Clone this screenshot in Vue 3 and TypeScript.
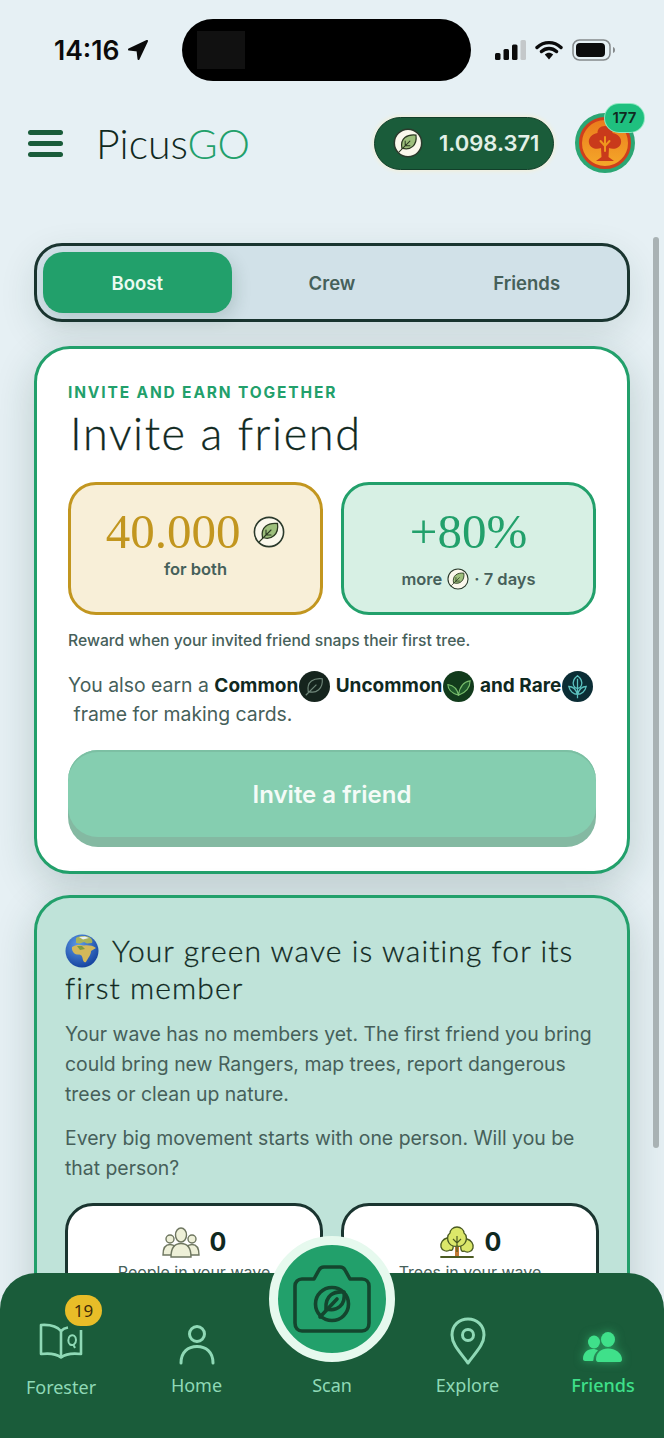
<script setup lang="ts">
interface NavItem {
  id: string;
  label: string;
}

const navItems: NavItem[] = [
  { id: 'forester', label: 'Forester' },
  { id: 'home', label: 'Home' },
  { id: 'scan', label: 'Scan' },
  { id: 'explore', label: 'Explore' },
  { id: 'friends', label: 'Friends' },
];

const tabs = ['Boost', 'Crew', 'Friends'];
</script>

<template>
  <div class="page">
    <svg class="defs" width="0" height="0">
      <symbol id="coin" viewBox="0 0 32 32">
        <circle cx="16" cy="16" r="14.6" fill="#fbf8ec" stroke="#2b3a2c" stroke-width="1.6" />
        <path d="M24.5 7.5C15 6.5 7.5 11 9.5 21.5C19 24.5 26 18 24.5 7.5Z" fill="#9dbf7c" stroke="#2c3a22" stroke-width="1.3" />
        <path d="M6.5 25.5L18 14M13 19V14M13 19H18" fill="none" stroke="#2c3a22" stroke-width="1.1" stroke-linecap="round" />
      </symbol>
    </svg>

    <div class="status">
      <div class="time">
        <span>14:16</span>
        <svg width="22" height="22" viewBox="0 0 22 22"><path d="M20 2L2 10.5L10.5 11.5L11.5 20Z" fill="#0b0b0b" stroke="#0b0b0b" stroke-width="2" stroke-linejoin="round" /></svg>
      </div>
      <div class="status-icons">
        <svg class="signal" width="32" height="20" viewBox="0 0 32 20">
          <rect x="0" y="13" width="5.5" height="7" rx="1.5" fill="#0b0b0b" />
          <rect x="8.5" y="9" width="5.5" height="11" rx="1.5" fill="#0b0b0b" />
          <rect x="17" y="4.500" width="5.5" height="15.500" rx="1.5" fill="#0b0b0b" />
          <rect x="25.500" y="0" width="5.500" height="20" rx="1.500" fill="#c4c8ca" />
        </svg>
        <svg width="28" height="20" viewBox="0 0 28 20">
          <path d="M2 7.500C9 1 19 1 26 7.500M6.500 11.500C11 7.500 17 7.500 21.500 11.500" fill="none" stroke="#0b0b0b" stroke-width="3.400" stroke-linecap="round" />
          <path d="M9.800 14.500C12.500 12.300 15.500 12.300 18.200 14.500L14 19.500Z" fill="#0b0b0b" />
        </svg>
        <svg width="44" height="22" viewBox="0 0 44 22">
          <rect x="1" y="1" width="37" height="20" rx="6.500" fill="none" stroke="#85898b" stroke-width="1.500" />
          <rect x="4" y="4" width="29" height="14" rx="4" fill="#0b0b0b" />
          <path d="M41 8C42.500 8.500 43 9.500 43 11C43 12.500 42.500 13.500 41 14Z" fill="#85898b" />
        </svg>
      </div>
    </div>
    <div class="island"><div class="island-cam"></div></div>

    <header class="header">
      <div class="burger"><span></span><span></span><span></span></div>
      <div class="logo">Picus<span>GO</span></div>
      <div class="balance">
        <svg class="balance-coin" width="30" height="30"><use href="#coin" /></svg>
        <span>1.098.371</span>
      </div>
      <div class="avatar">
        <svg width="60" height="60" viewBox="0 0 60 60">
          <defs>
            <linearGradient id="medal" x1="0" y1="0" x2="0" y2="1">
              <stop offset="0" stop-color="#ea7a1c" />
              <stop offset="1" stop-color="#f5a92a" />
            </linearGradient>
          </defs>
          <circle cx="30" cy="30" r="30" fill="#2ba673" />
          <circle cx="30" cy="30" r="24.500" fill="url(#medal)" stroke="#cf3f1c" stroke-width="3" />
          <path d="M30 13C25 13 22.500 16 22.500 20C17 21 13 25 14 30C15 35 21 37 26 35L26.500 44L21 48H39L33.500 44L34 35C39 37 45 35 46 30C47 25 43 21 37.500 20C37.500 16 35 13 30 13Z" fill="#c93a1b" />
          <path d="M30 38V24M25.500 28L30 33L34.500 28" fill="none" stroke="#f0961e" stroke-width="2" stroke-linecap="round" />
        </svg>
        <div class="level">177</div>
      </div>
    </header>

    <main class="content">
      <div class="tabs">
        <div v-for="(tab, i) in tabs" :key="tab" class="tab" :class="{ active: i === 0 }">{{ tab }}</div>
      </div>

      <section class="card invite">
        <div class="eyebrow">INVITE AND EARN TOGETHER</div>
        <h1 class="title">Invite a friend</h1>

        <div class="rewards">
          <div class="reward gold">
            <div class="amount">
              40.000
              <svg width="32" height="32"><use href="#coin" /></svg>
            </div>
            <div class="reward-sub">for both</div>
          </div>
          <div class="reward mint">
            <div class="amount">+80%</div>
            <div class="reward-sub">
              more
              <svg width="22" height="22"><use href="#coin" /></svg>
              · 7 days
            </div>
          </div>
        </div>

        <p class="note">Reward when your invited friend snaps their first tree.</p>

        <p class="earn">
          You also earn a <b>Common</b><svg class="frame" width="31" height="31" viewBox="0 0 32 32">
            <circle cx="16" cy="16" r="16" fill="#15241d" />
            <path d="M24 8C15 7 8 11 9.500 21C18 24 25 18 24 8Z" fill="none" stroke="#6f8679" stroke-width="1.200" />
            <path d="M7 25L18 14" stroke="#6f8679" stroke-width="1.200" />
          </svg> <b>Uncommon</b><svg class="frame" width="31" height="31" viewBox="0 0 32 32">
            <circle cx="16" cy="16" r="16" fill="#123b1c" />
            <path d="M16 25C15 19 11 15 5 14C5 20 9 23 16 25ZM16 25C17 17 21 11 28 10C28 17 24 22 16 25Z" fill="#1f5a2b" stroke="#79bd6c" stroke-width="1.100" />
          </svg> <b>and Rare</b><svg class="frame" width="31" height="31" viewBox="0 0 32 32">
            <circle cx="16" cy="16" r="16" fill="#0b2d35" />
            <path d="M16 5C12 8 11 12 12 15C13 17 15 18 16 18C17 18 19 17 20 15C21 12 20 8 16 5ZM16 8V28M16 24C12 24 8 21 7 16C10 16 14 18 16 24ZM16 24C20 24 24 21 25 16C22 16 18 18 16 24Z" fill="none" stroke="#5cc2c0" stroke-width="1.300" />
          </svg><br />&nbsp;frame for making cards.
        </p>

        <button class="invite-btn">Invite a friend</button>
      </section>

      <section class="card wave">
        <h2 class="wave-title">
          <svg class="globe" width="34" height="34" viewBox="0 0 34 34">
            <defs>
              <radialGradient id="sea" cx="40%" cy="30%" r="75%">
                <stop offset="0" stop-color="#5d9be8" />
                <stop offset="1" stop-color="#123f9c" />
              </radialGradient>
            </defs>
            <circle cx="17" cy="17" r="16.500" fill="url(#sea)" />
            <path d="M11 4C15 1.500 21 1.500 25 3.500C27 5 28 7 27 9L22 9.500L19 8L15 9.500L11 9Z" fill="#a9b35a" />
            <path d="M7 13C10 10.500 15 10.500 19 11.500C23 11 28 11.500 31 14L26 17C26 21 23 24 21 28C19 29 18 27 17.500 24C17 21 15.500 20.500 12 20.500C9 20 6.500 17 7 13Z" fill="#d3b85a" />
            <path d="M12 12L17 12L20 15L15 16Z" fill="#7f9a3f" />
            <path d="M14 3L20 2.500L24 4L18 5.500Z" fill="#e8f0f4" />
          </svg>
          Your green wave is waiting for its first member
        </h2>
        <p class="wave-text">Your wave has no members yet. The first friend you bring could bring new Rangers, map trees, report dangerous trees or clean up nature.</p>
        <p class="wave-text second">Every big movement starts with one person. Will you be that person?</p>

        <div class="stats">
          <div class="stat">
            <div class="stat-top">
              <svg width="38" height="32" viewBox="0 0 38 32">
                <g fill="#eef0d8" stroke="#6e7660" stroke-width="1.400">
                  <circle cx="8" cy="13" r="4" />
                  <circle cx="30" cy="13" r="4" />
                  <path d="M1 29C1 22 4 18.500 8 18.500C12 18.500 15 22 15 29Z" />
                  <path d="M23 29C23 22 26 18.500 30 18.500C34 18.500 37 22 37 29Z" />
                  <ellipse cx="19" cy="9" rx="5.500" ry="7" />
                  <path d="M9 31C9 22 13 17.500 19 17.500C25 17.500 29 22 29 31Z" />
                </g>
              </svg>
              <span>0</span>
            </div>
            <div class="stat-label">People in your wave</div>
          </div>
          <div class="stat">
            <div class="stat-top">
              <svg width="36" height="32" viewBox="0 0 36 32">
                <path d="M18 21V30" stroke="#c47a35" stroke-width="4" />
                <g fill="#dbe76a" stroke="#4a5a22" stroke-width="1.300">
                  <path d="M8 12C4 13 1 17 2 21C3 25 8 26 11 24C14 26 15 20 14 16C13 13 11 12 8 12Z" />
                  <path d="M28 13C32 14 35 18 34 22C33 26 28 27 25 25C22 27 21 21 22 17C23 14 25 13 28 13Z" />
                  <path d="M18 1C14 1 11 4 11 7C8 9 8 14 10 17C12 20 16 21 18 20C20 21 24 20 26 17C28 14 28 9 25 7C25 4 22 1 18 1Z" />
                </g>
                <path d="M18 26V10M14 13L18 17L22 13" fill="none" stroke="#4a5a22" stroke-width="1.200" />
                <path d="M2 31H34" stroke="#4a5a22" stroke-width="1.800" stroke-linecap="round" />
              </svg>
              <span>0</span>
            </div>
            <div class="stat-label">Trees in your wave</div>
          </div>
        </div>
      </section>
    </main>

    <div class="scrollbar"></div>

    <nav class="nav">
      <div v-for="item in navItems" :key="item.id" class="nav-item" :class="item.id">
        <div class="nav-icon">
          <template v-if="item.id === 'forester'">
            <svg width="46" height="36" viewBox="0 0 46 36" fill="none" stroke="currentColor" stroke-width="2.600" stroke-linejoin="round">
              <path d="M23 8C19 3 11 1.500 3 2V31C11 30 18 30.500 23 34.500C28 30.500 35 30 43 31V7" />
              <path d="M23 8V34" />
              <path d="M23 8C25 6 27 5 30 4.500" />
              <path d="M32 13C35 11 38 13 38 17C38 21 35 23 32 21.500C30 20 29.500 15 32 13ZM35 21L37 25" stroke-width="2" />
            </svg>
            <div class="badge">19</div>
          </template>
          <svg v-else-if="item.id === 'home'" width="36" height="40" viewBox="0 0 36 40" fill="none" stroke="currentColor" stroke-width="3" stroke-linecap="round">
            <circle cx="18" cy="9" r="7.500" />
            <path d="M2 38C2 27 9 21.500 18 21.500C27 21.500 34 27 34 38" />
          </svg>
          <svg v-else-if="item.id === 'explore'" width="36" height="48" viewBox="0 0 36 48" fill="none" stroke="currentColor" stroke-width="3" stroke-linejoin="round">
            <path d="M18 46C9 34 2 27 2 18C2 8.500 9 2 18 2C27 2 34 8.500 34 18C34 27 27 34 18 46Z" />
            <circle cx="18" cy="18" r="5.500" />
          </svg>
          <svg v-else-if="item.id === 'friends'" class="friends-icon" width="40" height="30" viewBox="0 0 40 30" fill="currentColor">
            <ellipse cx="11" cy="10" rx="6" ry="6.500" />
            <ellipse cx="25" cy="7.500" rx="7" ry="7.500" />
            <path d="M0 27C0 21 4 17 10 17C12 17 13.500 17.500 15 18.500C12 21 10.500 24 10.500 27.500C10.500 28.500 10 29 9 29H2C1 29 0 28 0 27Z" />
            <path d="M13 27.500C13 21 18 16.500 25 16.500C32 16.500 39 21 39 27.500C39 29 38 30 37 30H15C14 30 13 29 13 27.500Z" />
          </svg>
        </div>
        <div class="nav-label">{{ item.label }}</div>
      </div>

      <div class="scan-btn">
        <svg width="78" height="68" viewBox="0 0 78 68" fill="none" stroke="#14452e" stroke-width="3.600" stroke-linejoin="round">
          <path d="M9 14H21L26 5C27 3 28.500 2 31 2H47C49.500 2 51 3 52 5L57 14H69C73 14 76 17 76 21V58C76 63 73 66 69 66H9C5 66 2 63 2 58V21C2 17 5 14 9 14Z" />
          <circle cx="39" cy="39" r="16.500" />
          <path d="M51 27C41 26 32 30 33 44C44 47 53 40 51 27Z" />
          <path d="M27 52L44 34" stroke-linecap="round" />
        </svg>
      </div>
    </nav>
  </div>
</template>

<style>
html,
body {
  margin: 0;
  background: #e6f0f4;
}
</style>

<style scoped>
.page {
  position: relative;
  width: 664px;
  height: 1438px;
  overflow: hidden;
  background: #e6f0f4;
  font-family: 'Inter', sans-serif;
  color: #10291f;
}

.defs {
  position: absolute;
}

.status {
  height: 100px;
  box-sizing: border-box;
  padding: 32px 48px 0 54px;
  display: flex;
  justify-content: space-between;
  align-items: flex-start;
}

.time {
  display: flex;
  align-items: center;
  gap: 8px;
  font-size: 26.500px;
  font-weight: 600;
  line-height: 36px;
  color: #0b0b0b;
}

.status-icons {
  display: flex;
  align-items: center;
  gap: 9px;
  height: 36px;
}

.signal {
  margin-right: -1px;
}

.island {
  position: absolute;
  left: 182px;
  top: 19px;
  width: 289px;
  height: 62px;
  border-radius: 31px;
  background: #000;
}

.island-cam {
  position: absolute;
  left: 15px;
  top: 12px;
  width: 48px;
  height: 38px;
  background: #111;
}

.header {
  height: 86px;
  display: flex;
  align-items: center;
  padding: 0 29px 0 28px;
}

.burger {
  width: 35px;
  display: flex;
  flex-direction: column;
  gap: 6px;
  margin-right: 33px;
}

.burger span {
  height: 5px;
  border-radius: 3px;
  background: #1a5c3a;
}

.logo {
  font-family: 'Lato', sans-serif;
  font-size: 41px;
  font-weight: 300;
  letter-spacing: 0;
  color: #10291f;
}

.logo span {
  color: #22a06b;
}

.balance {
  margin-left: auto;
  width: 180px;
  height: 53px;
  box-sizing: border-box;
  padding-left: 18px;
  display: flex;
  align-items: center;
  gap: 16px;
  border-radius: 27px;
  background: #1a5c3a;
  border: 1px solid #123f2a;
  box-shadow: 0 0 4px 1px #f3efd6;
  color: #e2f0e7;
  font-size: 22px;
  font-weight: 600;
}

.avatar {
  position: relative;
  width: 60px;
  height: 60px;
  margin-left: 21px;
}

.level {
  position: absolute;
  left: 30px;
  top: -9px;
  width: 39px;
  height: 28px;
  border-radius: 14px;
  background: #1fc07f;
  box-shadow: 0 0 0 1px #8fe8c0;
  text-align: center;
  font-size: 15px;
  font-weight: 600;
  line-height: 28px;
  color: #10291f;
}

.content {
  padding: 57px 34px 0;
}

.tabs {
  height: 79px;
  box-sizing: border-box;
  padding: 6px;
  display: grid;
  grid-template-columns: repeat(3, 1fr);
  gap: 6px;
  border: 3px solid #1a3530;
  border-radius: 28px;
  background: #d1e1e8;
  box-shadow: 0 12px 36px rgba(20, 60, 50, 0.12);
}

.tab {
  display: flex;
  align-items: center;
  justify-content: center;
  border-radius: 20px;
  font-size: 18.500px;
  font-weight: 600;
  color: #46605a;
}

.tab.active {
  background: #22a06b;
  color: #eafaf1;
  box-shadow: 4px 6px 16px rgba(20, 60, 50, 0.15);
}

.card {
  box-sizing: border-box;
  border: 3px solid #22a06b;
  border-radius: 36px;
  box-shadow: 0 12px 40px rgba(20, 60, 50, 0.2);
}

.invite {
  margin-top: 24px;
  height: 528px;
  padding: 34px 31px 0;
  background: #fff;
}

.eyebrow {
  font-size: 15.500px;
  font-weight: 700;
  line-height: 20px;
  letter-spacing: 1.850px;
  color: #22a06b;
}

.title {
  margin: 3px 0 0 2px;
  font-family: 'Lato', sans-serif;
  font-size: 45px;
  font-weight: 300;
  line-height: 54px;
  letter-spacing: 1.600px;
  color: #10291f;
  -webkit-text-stroke: 0.3px #10291f;
}

.rewards {
  margin-top: 22px;
  display: grid;
  grid-template-columns: repeat(2, 255px);
  gap: 18px;
}

.reward {
  height: 133px;
  box-sizing: border-box;
  border: 3px solid;
  border-radius: 28px;
  display: flex;
  flex-direction: column;
  align-items: center;
  padding-top: 22px;
}

.reward.gold {
  border-color: #c2961f;
  background: #f8efd8;
  color: #c2961f;
}

.reward.mint {
  border-color: #22a06b;
  background: #d7f0e4;
  color: #22a06b;
}

.amount {
  display: flex;
  align-items: center;
  gap: 13px;
  font-family: 'Liberation Serif', serif;
  font-size: 49px;
  line-height: 50px;
}

.reward-sub {
  display: flex;
  align-items: center;
  gap: 5px;
  margin-top: 0;
  font-size: 16.500px;
  font-weight: 600;
  line-height: 24px;
  color: #46605a;
}

.mint .reward-sub {
  margin-top: 10px;
}

.note {
  margin: 16px 0 0;
  font-size: 15.700px;
  font-weight: 500;
  line-height: 20px;
  color: #46605a;
}

.earn {
  margin: 20px 0 0;
  font-size: 19.400px;
  line-height: 29px;
  white-space: nowrap;
  color: #46605a;
}

.earn b {
  font-size: 19px;
  font-weight: 700;
  color: #10291f;
}

.frame {
  vertical-align: middle;
  margin: -6px 0 -6px 1px;
}

.invite-btn {
  display: block;
  width: 100%;
  height: 87px;
  margin-top: 21px;
  padding-top: 3px;
  border: none;
  border-radius: 30px;
  background: #85ceb0;
  box-shadow: 0 10px 0 #84b9a2, inset 0 2px 0 #7cbfa3;
  font-family: inherit;
  font-size: 24px;
  font-weight: 600;
  color: #f4fbf7;
}

.wave {
  margin-top: 21px;
  padding: 34px 27px 0 28px;
  height: 460px;
  background: #bfe3d9;
}

.wave-title {
  margin: 0;
  font-family: 'Lato', sans-serif;
  font-size: 30px;
  font-weight: 300;
  line-height: 37px;
  letter-spacing: 1.100px;
  color: #10291f;
  -webkit-text-stroke: 0.3px #10291f;
}

.globe {
  vertical-align: -6px;
  margin-right: 5px;
}

.wave-text {
  margin: 13px 0 0;
  font-size: 19.400px;
  line-height: 30px;
  color: #46605a;
}

.wave-text.second {
  margin-top: 14px;
}

.stats {
  margin-top: 20px;
  display: grid;
  grid-template-columns: repeat(2, 258px);
  gap: 18px;
}

.stat {
  height: 120px;
  box-sizing: border-box;
  padding-top: 20px;
  border: 3px solid #1a3530;
  border-radius: 28px;
  background: #fff;
  text-align: center;
}

.stat-top {
  display: flex;
  align-items: center;
  justify-content: center;
  gap: 10px;
  font-size: 25px;
  font-weight: 700;
  color: #10291f;
}

.stat-label {
  margin-top: 4px;
  font-size: 16px;
  color: #46605a;
}

.scrollbar {
  position: absolute;
  left: 653px;
  top: 237px;
  width: 6px;
  height: 911px;
  border-radius: 3px;
  background: #a9b2b4;
}

.nav {
  position: absolute;
  left: 0;
  right: 0;
  bottom: 0;
  height: 165px;
  display: grid;
  grid-template-columns: repeat(5, 135.500px);
  justify-content: center;
  border-radius: 36px 36px 0 0;
  background: #1a5c3a;
  color: #8fd9b6;
}

.nav-item {
  display: flex;
  flex-direction: column;
  align-items: center;
  padding-top: 44px;
}

.nav-icon {
  position: relative;
  height: 48px;
  display: flex;
  align-items: flex-end;
  justify-content: center;
}

.nav-label {
  margin-top: 9px;
  font-family: 'Noto Sans', sans-serif;
  font-size: 18px;
  line-height: 22px;
}

.forester .nav-icon {
  transform: translateY(-6px);
}

.forester .nav-label {
  margin-top: 11px;
}

.badge {
  position: absolute;
  left: 27px;
  top: -16px;
  width: 37px;
  height: 31px;
  border-radius: 16px;
  background: #e8bd28;
  text-align: center;
  font-family: 'Noto Sans', sans-serif;
  font-size: 17px;
  line-height: 31px;
  color: #3d2a08;
}

.friends {
  color: #3fe08a;
  font-weight: 500;
}

.friends-icon {
  filter: drop-shadow(0 0 5px rgba(63, 224, 138, 0.5));
  margin-bottom: 3px;
}

.scan-btn {
  position: absolute;
  left: 269px;
  top: -37px;
  width: 126px;
  height: 126px;
  box-sizing: border-box;
  border: 9px solid #e6f9ee;
  border-radius: 50%;
  background: #22a06b;
  display: flex;
  align-items: center;
  justify-content: center;
}
</style>
